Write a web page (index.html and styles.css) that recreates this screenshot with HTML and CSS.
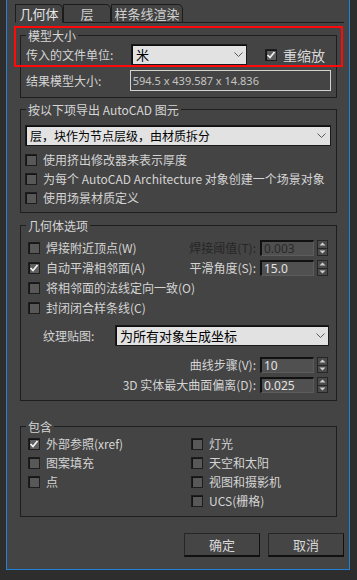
FILE: index.html
```html
<!DOCTYPE html>
<html lang="zh-CN">
<head>
<meta charset="utf-8">
<title>AutoCAD 导入选项</title>
<link rel="stylesheet" href="styles.css">
</head>
<body>
<div class="panel">
  <div class="tabs">
    <div class="tab tab-1 active">几何体</div>
    <div class="tab tab-2">层</div>
    <div class="tab tab-3">样条线渲染</div>
    <div class="tab-rest"></div>
  </div>

  <div class="page">
    <fieldset class="group g1">
      <legend>模型大小</legend>
      <div class="body b1">
        <div class="row r-units">
          <span class="lbl lbl-units">传入的文件单位:</span>
          <div class="select s-units"><span class="sel-text">米</span><svg class="chev" width="9" height="5" viewBox="0 0 9 5"><path d="M0.5 0.5 L4.5 4.5 L8.5 0.5" fill="none" stroke="#5a5a5a" stroke-width="1"/></svg></div>
          <div class="check rescale"><span class="box on"><svg width="10" height="10" viewBox="0 0 10 10"><path d="M1.5 5 L4 7.5 L8.5 2" fill="none" stroke="#f2f2f2" stroke-width="1.7"/></svg></span><span class="clbl big">重缩放</span></div>
        </div>
        <div class="row r-size">
          <span class="lbl lbl-size">结果模型大小:</span>
          <div class="readout">594.5 x 439.587 x 14.836</div>
        </div>
      </div>
    </fieldset>

    <fieldset class="group g2">
      <legend>按以下项导出 AutoCAD 图元</legend>
      <div class="body b2">
        <div class="select s-wide"><span class="sel-text">层，块作为节点层级，由材质拆分</span><svg class="chev" width="9" height="5" viewBox="0 0 9 5"><path d="M0.5 0.5 L4.5 4.5 L8.5 0.5" fill="none" stroke="#5a5a5a" stroke-width="1"/></svg></div>
        <div class="checklist cl2">
          <div class="check"><span class="box"></span><span class="clbl">使用挤出修改器来表示厚度</span></div>
          <div class="check"><span class="box"></span><span class="clbl">为每个 AutoCAD Architecture 对象创建一个场景对象</span></div>
          <div class="check"><span class="box"></span><span class="clbl">使用场景材质定义</span></div>
        </div>
      </div>
    </fieldset>

    <fieldset class="group g3">
      <legend>几何体选项</legend>
      <div class="body b3">
        <div class="geo-grid">
          <div class="check c-weld"><span class="box"></span><span class="clbl">焊接附近顶点(W)</span></div>
          <div class="spin-item s-weld disabled">
            <span class="slbl">焊接阈值(T):</span>
            <div class="field">0.003</div>
            <div class="spin"><span class="sb up"><svg width="7" height="4" viewBox="0 0 7 4"><path d="M0.5 3.5 L3.5 0.5 L6.5 3.5Z" fill="#cfcfcf"/></svg></span><span class="sb down"><svg width="7" height="4" viewBox="0 0 7 4"><path d="M0.5 0.5 L3.5 3.5 L6.5 0.5Z" fill="#cfcfcf"/></svg></span></div>
          </div>
          <div class="check c-smooth"><span class="box on"><svg width="10" height="10" viewBox="0 0 10 10"><path d="M1.5 5 L4 7.5 L8.5 2" fill="none" stroke="#f2f2f2" stroke-width="1.7"/></svg></span><span class="clbl">自动平滑相邻面(A)</span></div>
          <div class="spin-item s-smooth">
            <span class="slbl">平滑角度(S):</span>
            <div class="field">15.0</div>
            <div class="spin"><span class="sb up"><svg width="7" height="4" viewBox="0 0 7 4"><path d="M0.5 3.5 L3.5 0.5 L6.5 3.5Z" fill="#cfcfcf"/></svg></span><span class="sb down"><svg width="7" height="4" viewBox="0 0 7 4"><path d="M0.5 0.5 L3.5 3.5 L6.5 0.5Z" fill="#cfcfcf"/></svg></span></div>
          </div>
          <div class="check c-normals"><span class="box"></span><span class="clbl">将相邻面的法线定向一致(O)</span></div>
          <div class="check c-close"><span class="box"></span><span class="clbl">封闭闭合样条线(C)</span></div>
        </div>

        <div class="row r-texture">
          <span class="lbl lbl-tex">纹理贴图:</span>
          <div class="select s-tex"><span class="sel-text">为所有对象生成坐标</span><svg class="chev" width="9" height="5" viewBox="0 0 9 5"><path d="M0.5 0.5 L4.5 4.5 L8.5 0.5" fill="none" stroke="#5a5a5a" stroke-width="1"/></svg></div>
        </div>

        <div class="spin-rows">
          <div class="spin-item">
            <span class="slbl">曲线步骤(V):</span>
            <div class="field">10</div>
            <div class="spin"><span class="sb up"><svg width="7" height="4" viewBox="0 0 7 4"><path d="M0.5 3.5 L3.5 0.5 L6.5 3.5Z" fill="#cfcfcf"/></svg></span><span class="sb down"><svg width="7" height="4" viewBox="0 0 7 4"><path d="M0.5 0.5 L3.5 3.5 L6.5 0.5Z" fill="#cfcfcf"/></svg></span></div>
          </div>
          <div class="spin-item">
            <span class="slbl">3D 实体最大曲面偏离(D):</span>
            <div class="field">0.025</div>
            <div class="spin"><span class="sb up"><svg width="7" height="4" viewBox="0 0 7 4"><path d="M0.5 3.5 L3.5 0.5 L6.5 3.5Z" fill="#cfcfcf"/></svg></span><span class="sb down"><svg width="7" height="4" viewBox="0 0 7 4"><path d="M0.5 0.5 L3.5 3.5 L6.5 0.5Z" fill="#cfcfcf"/></svg></span></div>
          </div>
        </div>
      </div>
    </fieldset>

    <fieldset class="group g4">
      <legend>包含</legend>
      <div class="body b4">
        <div class="inc-col inc-left">
          <div class="check"><span class="box on"><svg width="10" height="10" viewBox="0 0 10 10"><path d="M1.5 5 L4 7.5 L8.5 2" fill="none" stroke="#f2f2f2" stroke-width="1.7"/></svg></span><span class="clbl">外部参照(xref)</span></div>
          <div class="check"><span class="box"></span><span class="clbl">图案填充</span></div>
          <div class="check"><span class="box"></span><span class="clbl">点</span></div>
        </div>
        <div class="inc-col inc-right">
          <div class="check"><span class="box"></span><span class="clbl">灯光</span></div>
          <div class="check"><span class="box"></span><span class="clbl">天空和太阳</span></div>
          <div class="check"><span class="box"></span><span class="clbl">视图和摄影机</span></div>
          <div class="check"><span class="box"></span><span class="clbl">UCS(栅格)</span></div>
        </div>
      </div>
    </fieldset>
  </div>

  <div class="buttons">
    <div class="btn">确定</div>
    <div class="btn">取消</div>
  </div>

  <div class="highlight"></div>
</div>
</body>
</html>
```

FILE: styles.css
```css
* { box-sizing: border-box; }
html, body { margin: 0; padding: 0; }
body {
  width: 357px;
  height: 580px;
  overflow: hidden;
  background: #2d2d2d;
  font-family: "Noto Sans CJK SC", "Noto Sans", sans-serif;
  font-size: 12px;
  line-height: 16px;
  color: #d4d4d4;
}

.panel {
  position: relative;
  margin-left: 6px;
  width: 344px;
  height: 570px;
  background: #444444;
  border: 1px solid #2181d6;
  border-top: 0;
  display: flex;
  flex-direction: column;
}

/* tabs */
.tabs {
  display: flex;
  align-items: flex-end;
  height: 23px;
  padding: 4px 5px 0 8px;
}
.tab {
  height: 19px;
  border: 1px solid #1c1c1c;
  border-top-right-radius: 5px;
  line-height: 17px;
  text-align: center;
  font-size: 13px;
  color: #d0d0d0;
  background: #434343;
}
.tab.active {
  border-bottom-color: #444444;
  color: #e6e6e6;
  background: #444444;
}
.tab-1 { width: 48px; }
.tab-2 { width: 48px; }
.tab-3 { width: 72px; }
.tab-rest {
  flex: 1;
  height: 19px;
  border-bottom: 1px solid #1c1c1c;
}

/* page */
.page {
  padding: 0 12px 0 13px;
}
.group {
  margin: 0;
  padding: 0;
  min-width: 0;
  border: 1px solid #1e1e1e;
}
.group legend {
  margin-left: 5px;
  padding: 0 2px;
  height: 15px;
  line-height: 15px;
  font-size: 12px;
  color: #d6d6d6;
}
.g1 { margin-top: 5px; }
.g2 { margin-top: 4px; }
.g3 { margin-top: 5px; }
.g4 { margin-top: 18px; }

.row {
  display: flex;
  align-items: center;
  height: 21px;
}

/* group 1 */
.b1 { padding: 1px 5px 6px 5px; }
.lbl { white-space: nowrap; }
.lbl-units { width: 105px; }
.lbl-size { width: 104px; }
.r-size { margin-top: 5px; }

.select {
  display: flex;
  align-items: center;
  justify-content: space-between;
  height: 21px;
  background: #e2e2e2;
  border: 1px solid #1a1a1a;
  box-shadow: inset 1px 1px 0 #0e0e0e;
  color: #000;
  padding: 0 3px 0 3px;
}
.sel-text { white-space: nowrap; line-height: 19px; }
.chev { flex: none; }
.s-units { width: 116px; font-size: 13px; }
.s-units .sel-text { padding-left: 1px; }

.rescale { margin-left: 18px; }
.clbl.big { font-size: 14px; color: #d8d8d8; }

.readout {
  width: 202px;
  height: 21px;
  border: 1px solid #d2d2d2;
  padding-left: 2px;
  font-family: "Noto Sans", sans-serif;
  font-size: 11px;
  line-height: 19px;
  color: #c4c4c4;
}

/* checkboxes */
.check {
  display: flex;
  align-items: center;
  height: 19px;
  white-space: nowrap;
}
.box {
  flex: none;
  width: 12px;
  height: 12px;
  background: #585858;
  border: 1px solid #1e1e1e;
  box-shadow: inset 1px 1px 0 #141414;
  display: flex;
  align-items: center;
  justify-content: center;
}
.box.on { background: #5e5e5e; }
.clbl { margin-left: 6px; }

/* group 2 */
.b2 { padding: 8px 5px 5px 4px; }
.s-wide { width: 100%; padding-right: 4px; }
.s-wide .sel-text { padding-left: 1px; }
.cl2 { margin-top: 4px; }

/* group 3 */
.b3 { padding: 5px 8px 5px 7px; }
.geo-grid {
  display: grid;
  grid-template-columns: 1fr auto;
  grid-auto-rows: 20px;
}
.geo-grid .check { height: 20px; }
.c-weld { grid-column: 1; grid-row: 1; }
.s-weld { grid-column: 2; grid-row: 1; }
.c-smooth { grid-column: 1; grid-row: 2; }
.s-smooth { grid-column: 2; grid-row: 2; }
.c-normals { grid-column: 1 / 3; grid-row: 3; }
.c-close { grid-column: 1 / 3; grid-row: 4; }

.spin-item {
  display: flex;
  align-items: center;
  justify-content: flex-end;
  height: 20px;
  white-space: nowrap;
}
.slbl { margin-right: 4px; }
.field {
  width: 54px;
  height: 16px;
  background: #505050;
  border-top: 2px solid #111;
  border-left: 2px solid #111;
  border-right: 1px solid #5c5c5c;
  border-bottom: 1px solid #5c5c5c;
  padding-left: 2px;
  font-family: "Noto Sans", sans-serif;
  font-size: 12px;
  line-height: 13px;
  color: #e2e2e2;
}
.spin {
  margin-left: 3px;
  width: 11px;
  height: 16px;
  display: flex;
  flex-direction: column;
}
.sb {
  flex: 1;
  display: flex;
  align-items: center;
  justify-content: center;
  background: #4a4a4a;
  border: 1px solid #262626;
}
.sb.down { border-top: 0; }
.disabled .slbl { color: #262626; }
.disabled .field { color: #2a2a2a; }

.r-texture { margin-top: 7px; }
.lbl-tex { width: 72px; margin-left: 15px; }
.s-tex { width: 214px; margin-right: -1px; font-size: 13px; }
.s-tex .sel-text { padding-left: 1px; }

.spin-rows { margin-top: 9px; }

/* group 4 */
.b4 {
  display: flex;
  padding: 0 5px 6px 7px;
}
.inc-left { width: 163px; }

/* buttons */
.buttons {
  display: flex;
  justify-content: flex-end;
  gap: 8px;
  margin-top: 16px;
  padding-right: 5px;
}
.btn {
  width: 76px;
  height: 24px;
  border: 1px solid #262626;
  border-right-color: #111;
  border-bottom: 2px solid #111;
  background: #454545;
  text-align: center;
  line-height: 21px;
  font-size: 13px;
  color: #d8d8d8;
}

/* annotation highlight */
.highlight {
  position: absolute;
  left: 7px;
  top: 26px;
  width: 329px;
  height: 41px;
  border: 2px solid #ff0a0a;
  pointer-events: none;
}
```
